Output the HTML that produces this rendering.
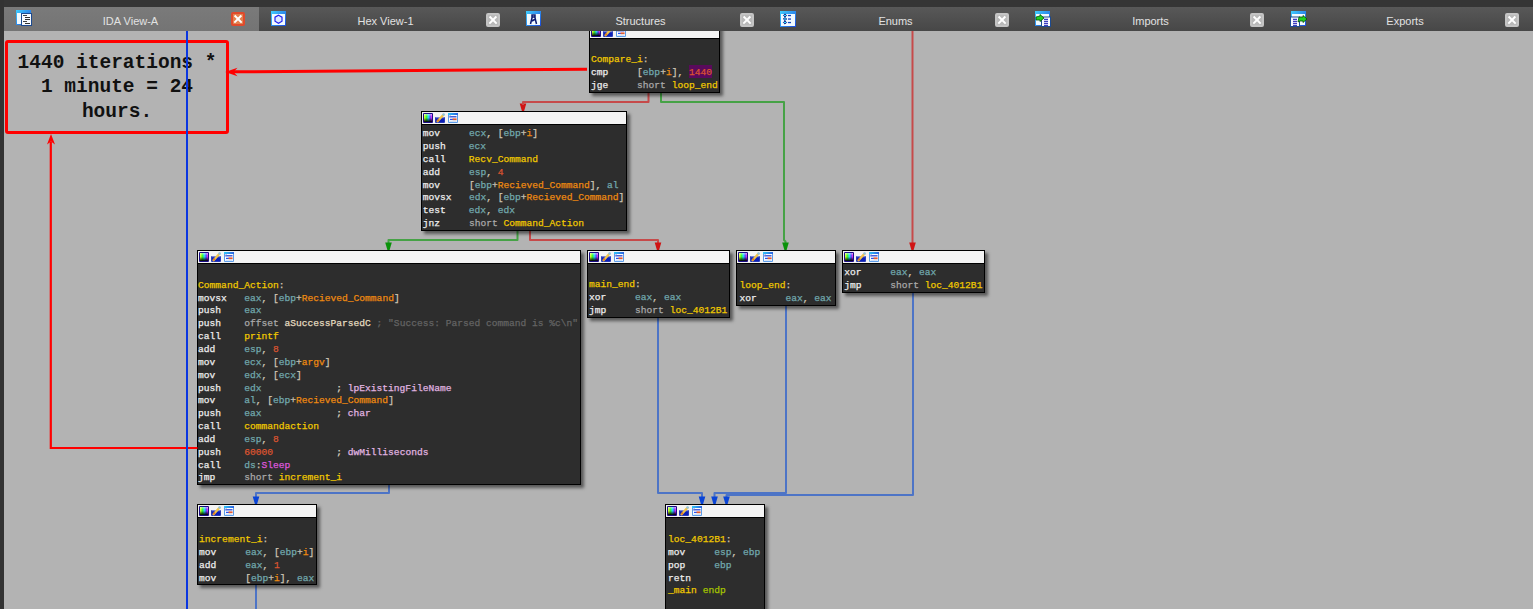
<!DOCTYPE html>
<html><head><meta charset="utf-8"><style>
*{box-sizing:content-box}
html,body{margin:0;padding:0}
body{width:1533px;height:609px;overflow:hidden;position:relative;background:#b3b3b3}
.ov{position:absolute;left:0;top:0}
.blk{position:absolute;border:1px solid #000;background:#2d2d2d;box-shadow:3px 3px 3px rgba(0,0,0,0.5)}
.hd{position:absolute;left:0;top:0;right:0;height:12px;background:#f4f4f4;border-bottom:1px solid #000}
.hi{position:absolute;top:1px}
.i1{left:1px;border:1px solid #10106a;background:linear-gradient(to bottom,rgba(0,0,0,0) 0%,rgba(0,0,0,0.9) 100%),linear-gradient(to right,#ffe000,#40e040,#00c0ff,#4040ff,#ff20ff)}
.i2{left:13px;border:1px solid #1a3a8a;background:linear-gradient(135deg,#4060c0 0%,#1a30a0 100%)}
.i2:after{content:"";position:absolute;left:1px;top:3px;width:9px;height:2px;background:#f0b020;transform:rotate(-45deg)}
.i3{left:26px;border:1px solid #5a9ae0;background:#fff}
.i3:before{content:"";position:absolute;left:1px;top:1px;width:6px;height:2px;background:#2050c0;box-shadow:0 3px 0 #2050c0}
.i3:after{content:"";position:absolute;left:3px;top:5px;width:5px;height:2px;background:#e04030}
.tx{position:absolute;font-family:"Liberation Mono",monospace;font-size:9.6px;line-height:12.84px;white-space:pre;color:#e4e4e4;-webkit-text-stroke:0.25px currentColor}
.top{position:absolute;left:0;top:0;width:1533px;height:7px;background:#353535}
.lft{position:absolute;left:0;top:0;width:4px;height:609px;background:#333}
.tab{position:absolute;top:7px;height:24px;background:linear-gradient(#585858,#474747)}
.tab.act{background:linear-gradient(#7a7a7a,#747474)}
.tl{position:absolute;left:-2px;right:0;top:7.5px;text-align:center;font-family:"Liberation Sans",sans-serif;font-size:11px;color:#e2e2e2}
.cls{position:absolute;left:227px;top:5px;width:14px;height:14px;box-sizing:border-box;border:2px solid #c4c4c4;border-radius:2px;background:#b9b9b9}
.act .cls{border-color:#e04a2c;background:#e4804e}
.cls:before,.cls:after{content:"";position:absolute;left:0px;top:3.8px;width:10px;height:2.4px;background:#fff;transform:rotate(45deg)}
.cls:after{transform:rotate(-45deg)}
.ticon{position:absolute}
.ann{position:absolute;left:5px;top:40px;width:218px;height:88px;border:3px solid #ff0000;border-radius:3px}
.annt{position:absolute;left:0;right:0;top:7.9px;text-align:center;font-family:"Liberation Mono",monospace;font-weight:bold;font-size:19.5px;line-height:24.5px;color:#111}
.vline{position:absolute;left:186px;top:31px;width:2px;height:578px;background:#0a36e0}
</style></head><body>
<svg width="0" height="0" style="position:absolute"><defs><linearGradient id="pg1" x1="0" y1="0" x2="1" y2="0"><stop offset="0" stop-color="#ffff30"/><stop offset="0.3" stop-color="#30ff20"/><stop offset="0.55" stop-color="#20d8ff"/><stop offset="0.78" stop-color="#5040ff"/><stop offset="1" stop-color="#ff20f0"/></linearGradient><linearGradient id="pg2" x1="0" y1="0" x2="0" y2="1"><stop offset="0" stop-color="#fff" stop-opacity="0.55"/><stop offset="0.35" stop-color="#fff" stop-opacity="0"/><stop offset="0.6" stop-color="#000" stop-opacity="0.25"/><stop offset="1" stop-color="#000" stop-opacity="1"/></linearGradient><linearGradient id="pg3" x1="0" y1="0" x2="1" y2="0"><stop offset="0" stop-color="#30c8f8"/><stop offset="1" stop-color="#2a5ee0"/></linearGradient></defs></svg>
<svg class="ov" width="1533" height="609"><path d="M648.5,93 L648.5,102 L523,102 L523,104" stroke="#c64a4a" stroke-width="2" fill="none" stroke-linejoin="round"/><path d="M523,102 L523,104" stroke="#c64a4a" stroke-width="2" fill="none" stroke-linejoin="round"/><polygon points="519.7,103.4 526.3,103.4 524.1,111.0 521.9,111.0" fill="#d01414"/><path d="M523,102 L523,105" stroke="#c64a4a" stroke-width="2" fill="none" stroke-linejoin="round"/><path d="M661,93 L661,102 L784,102 L784,240 L785.5,241.5 L785.5,244" stroke="#46a246" stroke-width="2" fill="none" stroke-linejoin="round"/><polygon points="782.2,242.4 788.8,242.4 786.6,250.0 784.4,250.0" fill="#0a920a"/><path d="M912.5,31 L912.5,244" stroke="#c64a4a" stroke-width="2" fill="none" stroke-linejoin="round"/><polygon points="909.2,242.4 915.8,242.4 913.6,250.0 911.4,250.0" fill="#d01414"/><path d="M517.5,231 L517.5,240 L388.5,240 L388.5,244" stroke="#46a246" stroke-width="2" fill="none" stroke-linejoin="round"/><polygon points="385.2,242.4 391.8,242.4 389.6,250.0 387.4,250.0" fill="#0a920a"/><path d="M530,231 L530,240 L658,240 L658,244" stroke="#c64a4a" stroke-width="2" fill="none" stroke-linejoin="round"/><polygon points="654.7,242.4 661.3,242.4 659.1,250.0 656.9,250.0" fill="#d01414"/><path d="M389,485 L389,493 L256,493 L256,498" stroke="#4d74c6" stroke-width="2" fill="none" stroke-linejoin="round"/><polygon points="252.7,496.4 259.3,496.4 257.1,504.0 254.9,504.0" fill="#0a44d6"/><path d="M256,585 L256,609" stroke="#4d74c6" stroke-width="2" fill="none" stroke-linejoin="round"/><path d="M658,318 L658,493 L702,493 L702,498" stroke="#4d74c6" stroke-width="2" fill="none" stroke-linejoin="round"/><polygon points="698.7,496.4 705.3,496.4 703.1,504.0 700.9,504.0" fill="#0a44d6"/><path d="M786,306 L786,493 L714.5,493 L714.5,498" stroke="#4d74c6" stroke-width="2" fill="none" stroke-linejoin="round"/><polygon points="711.2,496.4 717.8,496.4 715.6,504.0 713.4,504.0" fill="#0a44d6"/><path d="M913,293 L913,495 L726.5,495 L726.5,498" stroke="#4d74c6" stroke-width="2" fill="none" stroke-linejoin="round"/><polygon points="723.2,496.4 729.8,496.4 727.6,504.0 725.4,504.0" fill="#0a44d6"/></svg>
<div class="blk" style="left:589px;top:25px;width:129px;height:66px"><div class="hd"><svg class="hi" style="left:1px" width="10" height="10"><rect x="0" y="0" width="10" height="10" rx="1" fill="#1c0c86"/><rect x="1" y="1" width="8" height="8" fill="url(#pg1)"/><rect x="1" y="1" width="8" height="8" fill="url(#pg2)"/></svg><svg class="hi" style="left:13px" width="10" height="10"><rect x="0" y="4" width="10" height="6" rx="1" fill="#2a3cb8"/><rect x="1" y="5" width="8" height="4" fill="#0c20b8"/><rect x="1" y="4.2" width="8" height="1" fill="#8a98e0"/><path d="M2.6,8.2 L8.4,1.8" stroke="#f2c448" stroke-width="2.3" stroke-linecap="round"/><path d="M2.4,8.4 L4,6.6" stroke="#e07820" stroke-width="1.6"/><circle cx="8.6" cy="1.5" r="1.3" fill="#8cc4e4"/></svg><svg class="hi" style="left:26px" width="10" height="10"><rect x="0" y="0" width="10" height="10" rx="1" fill="#5c9ce8"/><rect x="0" y="0" width="10" height="2" fill="url(#pg3)"/><rect x="1" y="2" width="8" height="7" fill="#fbfdff"/><rect x="1.5" y="2.6" width="1.2" height="2" fill="#1830c8"/><rect x="3" y="3.2" width="5.5" height="1.2" fill="#2038d0"/><rect x="2" y="5.8" width="3" height="1.1" fill="#1040f0"/><rect x="4.6" y="5.4" width="4" height="1.8" fill="#e45a30"/><rect x="1.5" y="7.8" width="7" height="0.8" fill="#b8d0f0"/></svg></div></div><div style="position:absolute;left:689.02px;top:65.18px;width:23.06px;height:12.84px;background:#5a0a5c"></div><div class="tx" style="left:591.00px;top:41.24px">
<span style="color:#f0c800">Compare_i</span><span style="color:#cfc6b6">:</span>
<span style="color:#eeeeee">cmp</span><span style="color:#eeeeee">     </span><span style="color:#cfc6b6">[</span><span style="color:#72a9ae">ebp</span><span style="color:#cfc6b6">+</span><span style="color:#ee8a10">i</span><span style="color:#cfc6b6">]</span><span style="color:#cfc6b6">, </span><span style="color:#dc5430">1440</span>
<span style="color:#eeeeee">jge</span><span style="color:#eeeeee">     </span><span style="color:#a9a9a9">short </span><span style="color:#f0c800">loop_end</span></div>
<div class="blk" style="left:421px;top:111px;width:204px;height:118px"><div class="hd"><svg class="hi" style="left:1px" width="10" height="10"><rect x="0" y="0" width="10" height="10" rx="1" fill="#1c0c86"/><rect x="1" y="1" width="8" height="8" fill="url(#pg1)"/><rect x="1" y="1" width="8" height="8" fill="url(#pg2)"/></svg><svg class="hi" style="left:13px" width="10" height="10"><rect x="0" y="4" width="10" height="6" rx="1" fill="#2a3cb8"/><rect x="1" y="5" width="8" height="4" fill="#0c20b8"/><rect x="1" y="4.2" width="8" height="1" fill="#8a98e0"/><path d="M2.6,8.2 L8.4,1.8" stroke="#f2c448" stroke-width="2.3" stroke-linecap="round"/><path d="M2.4,8.4 L4,6.6" stroke="#e07820" stroke-width="1.6"/><circle cx="8.6" cy="1.5" r="1.3" fill="#8cc4e4"/></svg><svg class="hi" style="left:26px" width="10" height="10"><rect x="0" y="0" width="10" height="10" rx="1" fill="#5c9ce8"/><rect x="0" y="0" width="10" height="2" fill="url(#pg3)"/><rect x="1" y="2" width="8" height="7" fill="#fbfdff"/><rect x="1.5" y="2.6" width="1.2" height="2" fill="#1830c8"/><rect x="3" y="3.2" width="5.5" height="1.2" fill="#2038d0"/><rect x="2" y="5.8" width="3" height="1.1" fill="#1040f0"/><rect x="4.6" y="5.4" width="4" height="1.8" fill="#e45a30"/><rect x="1.5" y="7.8" width="7" height="0.8" fill="#b8d0f0"/></svg></div></div><div class="tx" style="left:422.80px;top:128.14px"><span style="color:#eeeeee">mov</span><span style="color:#eeeeee">     </span><span style="color:#72a9ae">ecx</span><span style="color:#cfc6b6">, </span><span style="color:#cfc6b6">[</span><span style="color:#72a9ae">ebp</span><span style="color:#cfc6b6">+</span><span style="color:#ee8a10">i</span><span style="color:#cfc6b6">]</span>
<span style="color:#eeeeee">push</span><span style="color:#eeeeee">    </span><span style="color:#72a9ae">ecx</span>
<span style="color:#eeeeee">call</span><span style="color:#eeeeee">    </span><span style="color:#f0c800">Recv_Command</span>
<span style="color:#eeeeee">add</span><span style="color:#eeeeee">     </span><span style="color:#72a9ae">esp</span><span style="color:#cfc6b6">, </span><span style="color:#dc5430">4</span>
<span style="color:#eeeeee">mov</span><span style="color:#eeeeee">     </span><span style="color:#cfc6b6">[</span><span style="color:#72a9ae">ebp</span><span style="color:#cfc6b6">+</span><span style="color:#ee8a10">Recieved_Command</span><span style="color:#cfc6b6">]</span><span style="color:#cfc6b6">, </span><span style="color:#72a9ae">al</span>
<span style="color:#eeeeee">movsx</span><span style="color:#eeeeee">   </span><span style="color:#72a9ae">edx</span><span style="color:#cfc6b6">, </span><span style="color:#cfc6b6">[</span><span style="color:#72a9ae">ebp</span><span style="color:#cfc6b6">+</span><span style="color:#ee8a10">Recieved_Command</span><span style="color:#cfc6b6">]</span>
<span style="color:#eeeeee">test</span><span style="color:#eeeeee">    </span><span style="color:#72a9ae">edx</span><span style="color:#cfc6b6">, </span><span style="color:#72a9ae">edx</span>
<span style="color:#eeeeee">jnz</span><span style="color:#eeeeee">     </span><span style="color:#a9a9a9">short </span><span style="color:#f0c800">Command_Action</span></div>
<div class="blk" style="left:197px;top:250px;width:382px;height:233px"><div class="hd"><svg class="hi" style="left:1px" width="10" height="10"><rect x="0" y="0" width="10" height="10" rx="1" fill="#1c0c86"/><rect x="1" y="1" width="8" height="8" fill="url(#pg1)"/><rect x="1" y="1" width="8" height="8" fill="url(#pg2)"/></svg><svg class="hi" style="left:13px" width="10" height="10"><rect x="0" y="4" width="10" height="6" rx="1" fill="#2a3cb8"/><rect x="1" y="5" width="8" height="4" fill="#0c20b8"/><rect x="1" y="4.2" width="8" height="1" fill="#8a98e0"/><path d="M2.6,8.2 L8.4,1.8" stroke="#f2c448" stroke-width="2.3" stroke-linecap="round"/><path d="M2.4,8.4 L4,6.6" stroke="#e07820" stroke-width="1.6"/><circle cx="8.6" cy="1.5" r="1.3" fill="#8cc4e4"/></svg><svg class="hi" style="left:26px" width="10" height="10"><rect x="0" y="0" width="10" height="10" rx="1" fill="#5c9ce8"/><rect x="0" y="0" width="10" height="2" fill="url(#pg3)"/><rect x="1" y="2" width="8" height="7" fill="#fbfdff"/><rect x="1.5" y="2.6" width="1.2" height="2" fill="#1830c8"/><rect x="3" y="3.2" width="5.5" height="1.2" fill="#2038d0"/><rect x="2" y="5.8" width="3" height="1.1" fill="#1040f0"/><rect x="4.6" y="5.4" width="4" height="1.8" fill="#e45a30"/><rect x="1.5" y="7.8" width="7" height="0.8" fill="#b8d0f0"/></svg></div></div><div class="tx" style="left:198.10px;top:266.94px">
<span style="color:#f0c800">Command_Action</span><span style="color:#cfc6b6">:</span>
<span style="color:#eeeeee">movsx</span><span style="color:#eeeeee">   </span><span style="color:#72a9ae">eax</span><span style="color:#cfc6b6">, </span><span style="color:#cfc6b6">[</span><span style="color:#72a9ae">ebp</span><span style="color:#cfc6b6">+</span><span style="color:#ee8a10">Recieved_Command</span><span style="color:#cfc6b6">]</span>
<span style="color:#eeeeee">push</span><span style="color:#eeeeee">    </span><span style="color:#72a9ae">eax</span>
<span style="color:#eeeeee">push</span><span style="color:#eeeeee">    </span><span style="color:#a9a9a9">offset </span><span style="color:#e4dcc0">aSuccessParsedC</span><span style="color:#eeeeee"> </span><span style="color:#646464">;</span><span style="color:#646464"> &quot;Success: Parsed command is %c\n&quot;</span>
<span style="color:#eeeeee">call</span><span style="color:#eeeeee">    </span><span style="color:#f0c800">printf</span>
<span style="color:#eeeeee">add</span><span style="color:#eeeeee">     </span><span style="color:#72a9ae">esp</span><span style="color:#cfc6b6">, </span><span style="color:#dc5430">8</span>
<span style="color:#eeeeee">mov</span><span style="color:#eeeeee">     </span><span style="color:#72a9ae">ecx</span><span style="color:#cfc6b6">, </span><span style="color:#cfc6b6">[</span><span style="color:#72a9ae">ebp</span><span style="color:#cfc6b6">+</span><span style="color:#ee8a10">argv</span><span style="color:#cfc6b6">]</span>
<span style="color:#eeeeee">mov</span><span style="color:#eeeeee">     </span><span style="color:#72a9ae">edx</span><span style="color:#cfc6b6">, </span><span style="color:#cfc6b6">[</span><span style="color:#72a9ae">ecx</span><span style="color:#cfc6b6">]</span>
<span style="color:#eeeeee">push</span><span style="color:#eeeeee">    </span><span style="color:#72a9ae">edx</span><span style="color:#eeeeee">             </span><span style="color:#ddd5c5">; </span><span style="color:#e0b4e0">lpExistingFileName</span>
<span style="color:#eeeeee">mov</span><span style="color:#eeeeee">     </span><span style="color:#72a9ae">al</span><span style="color:#cfc6b6">, </span><span style="color:#cfc6b6">[</span><span style="color:#72a9ae">ebp</span><span style="color:#cfc6b6">+</span><span style="color:#ee8a10">Recieved_Command</span><span style="color:#cfc6b6">]</span>
<span style="color:#eeeeee">push</span><span style="color:#eeeeee">    </span><span style="color:#72a9ae">eax</span><span style="color:#eeeeee">             </span><span style="color:#ddd5c5">; </span><span style="color:#e0b4e0">char</span>
<span style="color:#eeeeee">call</span><span style="color:#eeeeee">    </span><span style="color:#f0c800">commandaction</span>
<span style="color:#eeeeee">add</span><span style="color:#eeeeee">     </span><span style="color:#72a9ae">esp</span><span style="color:#cfc6b6">, </span><span style="color:#dc5430">8</span>
<span style="color:#eeeeee">push</span><span style="color:#eeeeee">    </span><span style="color:#dc5430">60000</span><span style="color:#eeeeee">           </span><span style="color:#ddd5c5">; </span><span style="color:#e0b4e0">dwMilliseconds</span>
<span style="color:#eeeeee">call</span><span style="color:#eeeeee">    </span><span style="color:#72a9ae">ds</span><span style="color:#cfc6b6">:</span><span style="color:#de58de">Sleep</span>
<span style="color:#eeeeee">jmp</span><span style="color:#eeeeee">     </span><span style="color:#a9a9a9">short </span><span style="color:#f0c800">increment_i</span></div>
<div class="blk" style="left:587px;top:250px;width:141px;height:66px"><div class="hd"><svg class="hi" style="left:1px" width="10" height="10"><rect x="0" y="0" width="10" height="10" rx="1" fill="#1c0c86"/><rect x="1" y="1" width="8" height="8" fill="url(#pg1)"/><rect x="1" y="1" width="8" height="8" fill="url(#pg2)"/></svg><svg class="hi" style="left:13px" width="10" height="10"><rect x="0" y="4" width="10" height="6" rx="1" fill="#2a3cb8"/><rect x="1" y="5" width="8" height="4" fill="#0c20b8"/><rect x="1" y="4.2" width="8" height="1" fill="#8a98e0"/><path d="M2.6,8.2 L8.4,1.8" stroke="#f2c448" stroke-width="2.3" stroke-linecap="round"/><path d="M2.4,8.4 L4,6.6" stroke="#e07820" stroke-width="1.6"/><circle cx="8.6" cy="1.5" r="1.3" fill="#8cc4e4"/></svg><svg class="hi" style="left:26px" width="10" height="10"><rect x="0" y="0" width="10" height="10" rx="1" fill="#5c9ce8"/><rect x="0" y="0" width="10" height="2" fill="url(#pg3)"/><rect x="1" y="2" width="8" height="7" fill="#fbfdff"/><rect x="1.5" y="2.6" width="1.2" height="2" fill="#1830c8"/><rect x="3" y="3.2" width="5.5" height="1.2" fill="#2038d0"/><rect x="2" y="5.8" width="3" height="1.1" fill="#1040f0"/><rect x="4.6" y="5.4" width="4" height="1.8" fill="#e45a30"/><rect x="1.5" y="7.8" width="7" height="0.8" fill="#b8d0f0"/></svg></div></div><div class="tx" style="left:589.00px;top:266.64px">
<span style="color:#f0c800">main_end</span><span style="color:#cfc6b6">:</span>
<span style="color:#eeeeee">xor</span><span style="color:#eeeeee">     </span><span style="color:#72a9ae">eax</span><span style="color:#cfc6b6">, </span><span style="color:#72a9ae">eax</span>
<span style="color:#eeeeee">jmp</span><span style="color:#eeeeee">     </span><span style="color:#a9a9a9">short </span><span style="color:#f0c800">loc_4012B1</span></div>
<div class="blk" style="left:736px;top:250px;width:98px;height:54px"><div class="hd"><svg class="hi" style="left:1px" width="10" height="10"><rect x="0" y="0" width="10" height="10" rx="1" fill="#1c0c86"/><rect x="1" y="1" width="8" height="8" fill="url(#pg1)"/><rect x="1" y="1" width="8" height="8" fill="url(#pg2)"/></svg><svg class="hi" style="left:13px" width="10" height="10"><rect x="0" y="4" width="10" height="6" rx="1" fill="#2a3cb8"/><rect x="1" y="5" width="8" height="4" fill="#0c20b8"/><rect x="1" y="4.2" width="8" height="1" fill="#8a98e0"/><path d="M2.6,8.2 L8.4,1.8" stroke="#f2c448" stroke-width="2.3" stroke-linecap="round"/><path d="M2.4,8.4 L4,6.6" stroke="#e07820" stroke-width="1.6"/><circle cx="8.6" cy="1.5" r="1.3" fill="#8cc4e4"/></svg><svg class="hi" style="left:26px" width="10" height="10"><rect x="0" y="0" width="10" height="10" rx="1" fill="#5c9ce8"/><rect x="0" y="0" width="10" height="2" fill="url(#pg3)"/><rect x="1" y="2" width="8" height="7" fill="#fbfdff"/><rect x="1.5" y="2.6" width="1.2" height="2" fill="#1830c8"/><rect x="3" y="3.2" width="5.5" height="1.2" fill="#2038d0"/><rect x="2" y="5.8" width="3" height="1.1" fill="#1040f0"/><rect x="4.6" y="5.4" width="4" height="1.8" fill="#e45a30"/><rect x="1.5" y="7.8" width="7" height="0.8" fill="#b8d0f0"/></svg></div></div><div class="tx" style="left:739.40px;top:267.64px">
<span style="color:#f0c800">loop_end</span><span style="color:#cfc6b6">:</span>
<span style="color:#eeeeee">xor</span><span style="color:#eeeeee">     </span><span style="color:#72a9ae">eax</span><span style="color:#cfc6b6">, </span><span style="color:#72a9ae">eax</span></div>
<div class="blk" style="left:842px;top:250px;width:141px;height:41px"><div class="hd"><svg class="hi" style="left:1px" width="10" height="10"><rect x="0" y="0" width="10" height="10" rx="1" fill="#1c0c86"/><rect x="1" y="1" width="8" height="8" fill="url(#pg1)"/><rect x="1" y="1" width="8" height="8" fill="url(#pg2)"/></svg><svg class="hi" style="left:13px" width="10" height="10"><rect x="0" y="4" width="10" height="6" rx="1" fill="#2a3cb8"/><rect x="1" y="5" width="8" height="4" fill="#0c20b8"/><rect x="1" y="4.2" width="8" height="1" fill="#8a98e0"/><path d="M2.6,8.2 L8.4,1.8" stroke="#f2c448" stroke-width="2.3" stroke-linecap="round"/><path d="M2.4,8.4 L4,6.6" stroke="#e07820" stroke-width="1.6"/><circle cx="8.6" cy="1.5" r="1.3" fill="#8cc4e4"/></svg><svg class="hi" style="left:26px" width="10" height="10"><rect x="0" y="0" width="10" height="10" rx="1" fill="#5c9ce8"/><rect x="0" y="0" width="10" height="2" fill="url(#pg3)"/><rect x="1" y="2" width="8" height="7" fill="#fbfdff"/><rect x="1.5" y="2.6" width="1.2" height="2" fill="#1830c8"/><rect x="3" y="3.2" width="5.5" height="1.2" fill="#2038d0"/><rect x="2" y="5.8" width="3" height="1.1" fill="#1040f0"/><rect x="4.6" y="5.4" width="4" height="1.8" fill="#e45a30"/><rect x="1.5" y="7.8" width="7" height="0.8" fill="#b8d0f0"/></svg></div></div><div class="tx" style="left:844.20px;top:267.14px"><span style="color:#eeeeee">xor</span><span style="color:#eeeeee">     </span><span style="color:#72a9ae">eax</span><span style="color:#cfc6b6">, </span><span style="color:#72a9ae">eax</span>
<span style="color:#eeeeee">jmp</span><span style="color:#eeeeee">     </span><span style="color:#a9a9a9">short </span><span style="color:#f0c800">loc_4012B1</span></div>
<div class="blk" style="left:197px;top:504px;width:118px;height:79px"><div class="hd"><svg class="hi" style="left:1px" width="10" height="10"><rect x="0" y="0" width="10" height="10" rx="1" fill="#1c0c86"/><rect x="1" y="1" width="8" height="8" fill="url(#pg1)"/><rect x="1" y="1" width="8" height="8" fill="url(#pg2)"/></svg><svg class="hi" style="left:13px" width="10" height="10"><rect x="0" y="4" width="10" height="6" rx="1" fill="#2a3cb8"/><rect x="1" y="5" width="8" height="4" fill="#0c20b8"/><rect x="1" y="4.2" width="8" height="1" fill="#8a98e0"/><path d="M2.6,8.2 L8.4,1.8" stroke="#f2c448" stroke-width="2.3" stroke-linecap="round"/><path d="M2.4,8.4 L4,6.6" stroke="#e07820" stroke-width="1.6"/><circle cx="8.6" cy="1.5" r="1.3" fill="#8cc4e4"/></svg><svg class="hi" style="left:26px" width="10" height="10"><rect x="0" y="0" width="10" height="10" rx="1" fill="#5c9ce8"/><rect x="0" y="0" width="10" height="2" fill="url(#pg3)"/><rect x="1" y="2" width="8" height="7" fill="#fbfdff"/><rect x="1.5" y="2.6" width="1.2" height="2" fill="#1830c8"/><rect x="3" y="3.2" width="5.5" height="1.2" fill="#2038d0"/><rect x="2" y="5.8" width="3" height="1.1" fill="#1040f0"/><rect x="4.6" y="5.4" width="4" height="1.8" fill="#e45a30"/><rect x="1.5" y="7.8" width="7" height="0.8" fill="#b8d0f0"/></svg></div></div><div class="tx" style="left:199.10px;top:521.14px">
<span style="color:#f0c800">increment_i</span><span style="color:#cfc6b6">:</span>
<span style="color:#eeeeee">mov</span><span style="color:#eeeeee">     </span><span style="color:#72a9ae">eax</span><span style="color:#cfc6b6">, </span><span style="color:#cfc6b6">[</span><span style="color:#72a9ae">ebp</span><span style="color:#cfc6b6">+</span><span style="color:#ee8a10">i</span><span style="color:#cfc6b6">]</span>
<span style="color:#eeeeee">add</span><span style="color:#eeeeee">     </span><span style="color:#72a9ae">eax</span><span style="color:#cfc6b6">, </span><span style="color:#dc5430">1</span>
<span style="color:#eeeeee">mov</span><span style="color:#eeeeee">     </span><span style="color:#cfc6b6">[</span><span style="color:#72a9ae">ebp</span><span style="color:#cfc6b6">+</span><span style="color:#ee8a10">i</span><span style="color:#cfc6b6">]</span><span style="color:#cfc6b6">, </span><span style="color:#72a9ae">eax</span></div>
<div class="blk" style="left:665px;top:504px;width:98px;height:134px"><div class="hd"><svg class="hi" style="left:1px" width="10" height="10"><rect x="0" y="0" width="10" height="10" rx="1" fill="#1c0c86"/><rect x="1" y="1" width="8" height="8" fill="url(#pg1)"/><rect x="1" y="1" width="8" height="8" fill="url(#pg2)"/></svg><svg class="hi" style="left:13px" width="10" height="10"><rect x="0" y="4" width="10" height="6" rx="1" fill="#2a3cb8"/><rect x="1" y="5" width="8" height="4" fill="#0c20b8"/><rect x="1" y="4.2" width="8" height="1" fill="#8a98e0"/><path d="M2.6,8.2 L8.4,1.8" stroke="#f2c448" stroke-width="2.3" stroke-linecap="round"/><path d="M2.4,8.4 L4,6.6" stroke="#e07820" stroke-width="1.6"/><circle cx="8.6" cy="1.5" r="1.3" fill="#8cc4e4"/></svg><svg class="hi" style="left:26px" width="10" height="10"><rect x="0" y="0" width="10" height="10" rx="1" fill="#5c9ce8"/><rect x="0" y="0" width="10" height="2" fill="url(#pg3)"/><rect x="1" y="2" width="8" height="7" fill="#fbfdff"/><rect x="1.5" y="2.6" width="1.2" height="2" fill="#1830c8"/><rect x="3" y="3.2" width="5.5" height="1.2" fill="#2038d0"/><rect x="2" y="5.8" width="3" height="1.1" fill="#1040f0"/><rect x="4.6" y="5.4" width="4" height="1.8" fill="#e45a30"/><rect x="1.5" y="7.8" width="7" height="0.8" fill="#b8d0f0"/></svg></div></div><div class="tx" style="left:668.10px;top:521.14px">
<span style="color:#f0c800">loc_4012B1</span><span style="color:#cfc6b6">:</span>
<span style="color:#eeeeee">mov</span><span style="color:#eeeeee">     </span><span style="color:#72a9ae">esp</span><span style="color:#cfc6b6">, </span><span style="color:#72a9ae">ebp</span>
<span style="color:#eeeeee">pop</span><span style="color:#eeeeee">     </span><span style="color:#72a9ae">ebp</span>
<span style="color:#eeeeee">retn</span>
<span style="color:#f0c800">_main</span><span style="color:#eeeeee"> </span><span style="color:#a6c400">endp</span></div>
<div class="ann"><div class="annt">1440 iterations *<br>1 minute = 24<br>hours.</div></div>
<svg class="ov" width="1533" height="609"><path d="M587,69.3 L232,71.8" stroke="#ff0000" stroke-width="3" fill="none"/><polygon points="225.2,72 237.5,67.8 233.5,71.9 237.5,76.2" fill="#ff0000"/><path d="M197.5,448 L50.8,448 L50.8,142" stroke="#ff0000" stroke-width="2.2" fill="none" stroke-linejoin="miter"/><polygon points="51,134 47,144.5 51,141.5 55,144.5" fill="#ff0000"/></svg>
<div class="vline"></div>
<div class="top"></div>
<div class="tab act" style="left:4.00px;width:255.00px"><span class="tl">IDA View-A</span><div class="cls" style="left:227px;top:5px"></div></div><div class="tab" style="left:259.00px;width:255.00px"><span class="tl">Hex View-1</span><div class="cls" style="left:227px;top:6px"></div></div><div class="tab" style="left:514.00px;width:255.00px"><span class="tl">Structures</span><div class="cls" style="left:226px;top:6px"></div></div><div class="tab" style="left:769.00px;width:255.00px"><span class="tl">Enums</span><div class="cls" style="left:226px;top:6px"></div></div><div class="tab" style="left:1024.00px;width:255.00px"><span class="tl">Imports</span><div class="cls" style="left:226px;top:6px"></div></div><div class="tab" style="left:1279.00px;width:254.00px"><span class="tl">Exports</span><div class="cls" style="left:226px;top:6px"></div></div><svg class="ticon" style="left:16px;top:10px" width="17" height="17" viewBox="0 0 17 17"><defs><linearGradient id="wg" x1="0" y1="0" x2="1" y2="1"><stop offset="0" stop-color="#40d0ff"/><stop offset="1" stop-color="#1a48d8"/></linearGradient></defs><rect x="0" y="0" width="15" height="15" fill="url(#wg)"/><rect x="1" y="3" width="13" height="11" fill="#f2fbff"/><rect x="5" y="3" width="11" height="13" fill="#1c4a90"/><rect x="6" y="4" width="9" height="11" fill="#f8fbff"/><rect x="7" y="5" width="4" height="1" fill="#444"/><rect x="9" y="7" width="5" height="1" fill="#333"/><rect x="9" y="9" width="5" height="1" fill="#333"/><rect x="7" y="11" width="4" height="1" fill="#444"/><rect x="9" y="13" width="5" height="1" fill="#333"/></svg><svg class="ticon" style="left:271px;top:11px" width="17" height="17" viewBox="0 0 17 17"><defs><linearGradient id="wg" x1="0" y1="0" x2="1" y2="1"><stop offset="0" stop-color="#40d0ff"/><stop offset="1" stop-color="#1a48d8"/></linearGradient></defs><rect x="0" y="0" width="15" height="15" fill="url(#wg)"/><rect x="1" y="3" width="13" height="11" fill="#f2fbff"/><polygon points="7.5,4.2 11,6.2 11,10.2 7.5,12.2 4,10.2 4,6.2" fill="#dde8ff" stroke="#2020f0" stroke-width="1.2"/></svg><svg class="ticon" style="left:526px;top:11px" width="17" height="17" viewBox="0 0 17 17"><defs><linearGradient id="wg" x1="0" y1="0" x2="1" y2="1"><stop offset="0" stop-color="#40d0ff"/><stop offset="1" stop-color="#1a48d8"/></linearGradient></defs><rect x="0" y="0" width="15" height="15" fill="url(#wg)"/><rect x="1" y="3" width="13" height="11" fill="#f2fbff"/><path d="M6,4 h3 v2 h-3 z M6.2,6 L4.5,13 M8.8,6 L10.5,13 M6,10 L9.5,8" stroke="#0a1a70" stroke-width="1.5" fill="none"/></svg><svg class="ticon" style="left:780px;top:11px" width="17" height="17" viewBox="0 0 17 17"><defs><linearGradient id="wg" x1="0" y1="0" x2="1" y2="1"><stop offset="0" stop-color="#40d0ff"/><stop offset="1" stop-color="#1a48d8"/></linearGradient></defs><rect x="0" y="0" width="16" height="16" fill="url(#wg)"/><rect x="1" y="3" width="14" height="12" fill="#f2fbff"/><polygon points="5,2.9 6.6,4.5 5,6.1 3.4,4.5" fill="#30e0ff" stroke="#0a2090" stroke-width="1"/><rect x="8" y="3.9" width="3" height="1.3" fill="#1040c0"/><polygon points="5,6.4 6.6,8 5,9.6 3.4,8" fill="#30e0ff" stroke="#0a2090" stroke-width="1"/><rect x="8" y="7.4" width="3" height="1.3" fill="#1040c0"/><polygon points="5,9.9 6.6,11.5 5,13.1 3.4,11.5" fill="#30e0ff" stroke="#0a2090" stroke-width="1"/><rect x="8" y="10.9" width="3" height="1.3" fill="#1040c0"/></svg><svg class="ticon" style="left:1035px;top:11px" width="17" height="17" viewBox="0 0 17 17"><defs><linearGradient id="wg" x1="0" y1="0" x2="1" y2="1"><stop offset="0" stop-color="#40d0ff"/><stop offset="1" stop-color="#1a48d8"/></linearGradient></defs><rect x="0" y="0" width="15" height="15" fill="url(#wg)"/><rect x="1" y="3" width="13" height="11" fill="#f2fbff"/><rect x="6" y="5.5" width="10" height="10.5" fill="#1c4a90"/><rect x="7" y="6.5" width="8" height="8.5" fill="#f8fbff"/><rect x="9" y="7.8" width="4" height="1" fill="#1010b0"/><rect x="9" y="9.8" width="4" height="1" fill="#1010b0"/><rect x="9" y="11.8" width="4" height="1" fill="#1010b0"/><rect x="9" y="13.8" width="4" height="1" fill="#1010b0"/><polygon points="1,6 5,5 5,3.5 9,7 5,10.5 5,9 1,9" fill="#20d020" stroke="#064a06" stroke-width="0.8"/></svg><svg class="ticon" style="left:1290px;top:11px" width="17" height="17" viewBox="0 0 17 17"><defs><linearGradient id="wg" x1="0" y1="0" x2="1" y2="1"><stop offset="0" stop-color="#40d0ff"/><stop offset="1" stop-color="#1a48d8"/></linearGradient></defs><rect x="1" y="0" width="15" height="15" fill="url(#wg)"/><rect x="2" y="3" width="13" height="11" fill="#f2fbff"/><rect x="0" y="5.5" width="10" height="10.5" fill="#1c4a90"/><rect x="1" y="6.5" width="8" height="8.5" fill="#f8fbff"/><rect x="3" y="7.8" width="4" height="1" fill="#1010b0"/><rect x="3" y="9.8" width="4" height="1" fill="#1010b0"/><rect x="3" y="11.8" width="4" height="1" fill="#1010b0"/><rect x="3" y="13.8" width="4" height="1" fill="#1010b0"/><polygon points="8,11 9,6 13,6 13,4.5 17,8 13,11.5 13,10 10,10" fill="#20d020" stroke="#064a06" stroke-width="0.8"/></svg>
<div class="lft"></div>
</body></html>
